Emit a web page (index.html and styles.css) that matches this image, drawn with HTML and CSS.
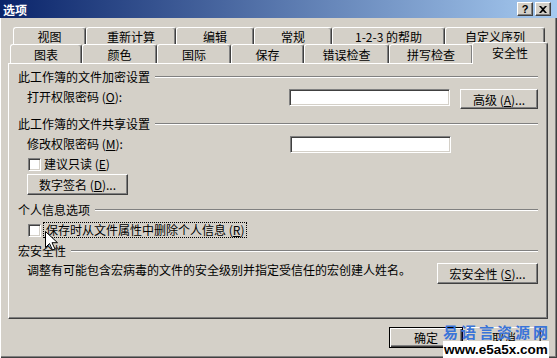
FILE: index.html
```html
<!DOCTYPE html>
<html lang="zh-CN">
<head>
<meta charset="UTF-8">
<title>选项</title>
<link rel="stylesheet" href="styles.css">
</head>
<body>
  <div class="window">
    <div class="titlebar">
      <span class="title">选项</span>
      <div class="title-btns">
        <div class="title-btn">?</div>
        <div class="title-btn">
          <svg width="8" height="7" viewBox="0 0 8 7"><path d="M0 0h2l2 2 2-2h2L5 3.5 8 7H6L4 5 2 7H0l3-3.5z" fill="#000"/></svg>
        </div>
      </div>
    </div>

    <div class="tabs">
      <div class="tab-row row-back">
        <div class="tab" style="width:73px">视图</div>
        <div class="tab" style="width:90px">重新计算</div>
        <div class="tab" style="width:78px">编辑</div>
        <div class="tab" style="width:78px">常规</div>
        <div class="tab" style="width:113px">1-2-3 的帮助</div>
        <div class="tab" style="width:100px">自定义序列</div>
      </div>
      <div class="tab-row row-front">
        <div class="tab" style="width:72px">图表</div>
        <div class="tab" style="width:75px">颜色</div>
        <div class="tab" style="width:74px">国际</div>
        <div class="tab" style="width:73px">保存</div>
        <div class="tab" style="width:85px">错误检查</div>
        <div class="tab" style="width:84px">拼写检查</div>
        <div class="tab active" style="width:76px">安全性</div>
      </div>
    </div>

    <div class="panel">
      <div class="group-head first">此工作簿的文件加密设置</div>
      <div class="field">
        <span class="field-label">打开权限密码 (<u>O</u>):</span>
        <div class="textbox"></div>
        <div class="btn btn-small">高级 (<u>A</u>)...</div>
      </div>

      <div class="group-head">此工作簿的文件共享设置</div>
      <div class="field field-2">
        <span class="field-label">修改权限密码 (<u>M</u>):</span>
        <div class="textbox"></div>
      </div>
      <div class="check-row">
        <div class="checkbox"></div>
        <span class="check-label">建议只读 (<u>E</u>)</span>
      </div>
      <div class="btn btn-wide sign-btn">数字签名 (<u>D</u>)...</div>

      <div class="group-head">个人信息选项</div>
      <div class="check-row check-row-2">
        <div class="checkbox"></div>
        <span class="check-label focused">保存时从文件属性中删除个人信息 (<u>R</u>)</span>
      </div>

      <div class="group-head">宏安全性</div>
      <div class="desc-row">
        <span class="desc">调整有可能包含宏病毒的文件的安全级别并指定受信任的宏创建人姓名。</span>
        <div class="btn btn-wide">宏安全性 (<u>S</u>)...</div>
      </div>
    </div>

    <div class="actions">
      <div class="btn btn-default">确定</div>
      <div class="btn btn-action">取消</div>
    </div>

    <!-- 鼠标指针 -->
    <svg class="cursor" width="13" height="20" viewBox="0 0 13 20">
      <path d="M0.5 0.5v16l4-4 3 6.5 2.5-1-3-6.3h5.5z" fill="#fff" stroke="#000" stroke-width="1"/>
    </svg>

    <!-- 水印 -->
    <div class="watermark">
      <div class="wm-cn">易语言资源网</div>
      <div class="wm-url">www.e5a5x.com</div>
    </div>
  </div>
</body>
</html>
```

FILE: styles.css
```css
* {
  box-sizing: border-box;
}
body {
  margin: 0;
  background: #d4d0c8;
  font-family: "Noto Sans CJK SC", "Liberation Sans", sans-serif;
  font-size: 12px;
  color: #000;
}
u {
  text-decoration: underline;
}

.window {
  position: relative;
  width: 557px;
  height: 358px;
  overflow: hidden;
  background: #d4d0c8;
  box-shadow: inset 1px 0 #fff, inset -1px -1px #404040, inset -2px -2px #808080;
}

/* タイトルバー */
.titlebar {
  height: 18px;
  display: flex;
  align-items: center;
  justify-content: space-between;
  padding: 0 6px 0 3px;
  background: linear-gradient(to right, #0a246a, #a6caf0);
  color: #fff;
  font-weight: bold;
}
.title-btns {
  display: flex;
  gap: 2px;
}
.title-btn {
  width: 16px;
  height: 14px;
  display: flex;
  align-items: center;
  justify-content: center;
  background: #d4d0c8;
  border: 1px solid;
  border-color: #fff #404040 #404040 #fff;
  box-shadow: inset -1px -1px #808080;
  color: #000;
  font: bold 11px "Liberation Sans", sans-serif;
}

/* タブ */
.tabs {
  margin-top: 9px;
}
.tab-row {
  display: flex;
}
.row-back {
  margin-left: 13px;
  height: 17px;
}
.row-front {
  margin-left: 10px;
  height: 19px;
}
.tab {
  display: flex;
  align-items: center;
  justify-content: center;
  height: 100%;
  background: #d4d0c8;
  border-top: 1px solid #fff;
  border-left: 1px solid #fff;
  border-right: 1px solid #404040;
  border-radius: 3px 3px 0 0;
  box-shadow: inset -1px 0 #808080;
}
.tab.active {
  position: relative;
  z-index: 1;
  height: 22px;
  margin: -2px 0 0 -1px;
  padding-bottom: 2px;
}

/* パネル */
.panel {
  margin-left: 8px;
  width: 540px;
  height: 256px;
  padding: 6px 9px 0 9px;
  border: 1px solid;
  border-color: #fff #404040 #404040 #fff;
  box-shadow: inset -1px -1px #808080;
}
.group-head {
  display: flex;
  align-items: center;
  height: 14px;
  line-height: 14px;
  margin-top: 8px;
}
.group-head.first {
  margin-top: 0;
}
.group-head::after {
  content: "";
  flex: 1;
  margin-left: 5px;
  border-top: 1px solid #808080;
  border-bottom: 1px solid #fff;
}
.group-head + .check-row-2,
.group-head + .field,
.group-head + .desc-row {
  margin-top: 5px;
}
.check-row-2 + .group-head {
  margin-top: 6px;
}

.field {
  display: flex;
  align-items: flex-start;
  margin-left: 9px;
}
.field-label {
  width: 263px;
  line-height: 16px;
}
.textbox {
  width: 161px;
  height: 17px;
  background: #fff;
  border: 1px solid;
  border-color: #808080 #fff #fff #808080;
  box-shadow: inset 1px 1px #404040, inset -1px -1px #d4d0c8;
}

.btn {
  display: flex;
  align-items: center;
  justify-content: center;
  background: #d4d0c8;
  border: 1px solid;
  border-color: #fff #404040 #404040 #fff;
  box-shadow: inset -1px -1px #808080;
}
.btn-small {
  width: 78px;
  height: 20px;
  margin-left: 10px;
}
.btn-wide {
  width: 101px;
  height: 21px;
}
.sign-btn {
  margin: 3px 0 0 9px;
}

.check-row {
  display: flex;
  align-items: center;
  height: 14px;
  margin: 4px 0 0 10px;
}
.check-row-2 {
  height: 16px;
}
.checkbox {
  width: 13px;
  height: 13px;
  background: #fff;
  border: 1px solid;
  border-color: #808080 #fff #fff #808080;
  box-shadow: inset 1px 1px #404040, inset -1px -1px #d4d0c8;
}
.check-label {
  margin-left: 3px;
  line-height: 14px;
}
.check-label.focused {
  margin-left: 2px;
  padding: 0 2px;
  border: 1px dotted #000;
}

.desc-row {
  display: flex;
  justify-content: space-between;
  align-items: flex-start;
  margin-left: 9px;
}
.desc {
  line-height: 14px;
}

/* ボタン行 */
.actions {
  display: flex;
  justify-content: flex-end;
  gap: 4px;
  margin-top: 8px;
  padding-right: 16px;
}
.btn-action,
.btn-default {
  width: 74px;
  height: 21px;
}
.btn-default {
  border-color: #000;
  box-shadow: inset 1px 1px #fff, inset -1px -1px #404040, inset -2px -2px #808080;
}

.cursor {
  position: absolute;
  left: 45px;
  top: 231px;
}

.watermark {
  position: absolute;
  left: 443px;
  top: 323px;
  white-space: nowrap;
}
.wm-cn {
  color: #3a74d8;
  font-weight: bold;
  font-size: 15px;
  line-height: 17px;
  letter-spacing: 3px;
}
.wm-url {
  display: inline-block;
  background: #fff;
  font: bold 13.5px "Liberation Sans", sans-serif;
  line-height: 17px;
  padding: 0 1px;
}
```
